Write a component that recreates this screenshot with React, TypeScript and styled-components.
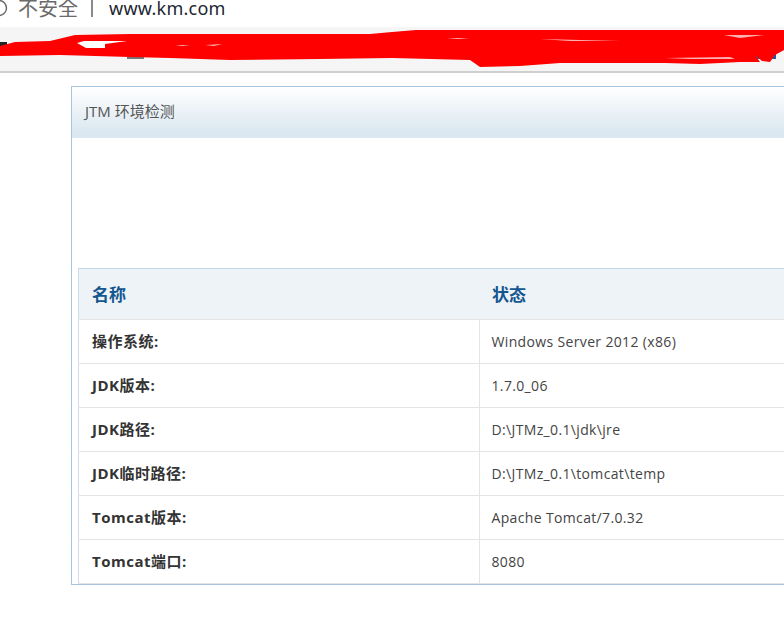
import { createGlobalStyle } from "styled-components";
import styled from "styled-components";

const Global = createGlobalStyle`
  html, body { margin: 0; padding: 0; background: #fff; }
  body {
    width: 784px; height: 624px; overflow: hidden; position: relative;
    font-family: "Open Sans", "Noto Sans CJK SC", sans-serif;
  }
`;

const AddressBar = styled.div`
  height: 15px; padding-bottom: 12px; display: flex; align-items: center;
  font-family: "Noto Sans", "Noto Sans CJK SC", sans-serif; font-size: 18px;
`;

const InfoIcon = styled.svg`width: 8px; height: 24px; flex: none;`;

const Insecure = styled.span`margin-left: 10px; color: #6a6a6a; font-size: 20px;`;

const Divider = styled.span`width: 2px; height: 18px; margin: 0 16px 0 13px; background: #8a8a8a;`;

const Url = styled.span`color: #1c2733; letter-spacing: .25px;`;

const BookmarkBar = styled.div`
  height: 44px; background: #f5f5f5;
  border-bottom: 2px solid #cfcfcf; position: relative;
`;

const Scribble = styled.svg`position: absolute; left: 0; top: -1px; width: 784px; height: 46px;`;

const Panel = styled.div`
  width: 760px; margin: 13px 0 0 71px;
  border: 1px solid #a9c4df; background: #fff;
`;

const PanelHeader = styled.div`
  height: 47px; display: flex; align-items: center; padding: 0 0 4px 13px;
  background: linear-gradient(#fff 0%, #dce8f1 85%);
  color: #555; font-size: 15px;
`;

const PanelBody = styled.div`padding: 130px 0 0 6px;`;

const Table = styled.table`
  width: 754px; border-collapse: collapse; table-layout: fixed;
  border-left: 1px solid #cfdbe8; font-size: 14px; color: #333;
`;

const HeadRow = styled.tr`background: #eef3f8; height: 51px;`;

const HeadCell = styled.th<{ $width?: number }>`
  width: ${({ $width }) => ($width ? `${$width}px` : "auto")};
  padding: 0 0 2px 13px; text-align: left;
  border-top: 1px solid #c5d8e8; border-bottom: 1px solid #e4e4e4;
  color: #14568f; font-size: 17px; font-weight: 700;
`;

const Row = styled.tr`height: 44px;`;

const Label = styled.td`
  padding: 0 0 3px 13px; border-bottom: 1px solid #e4e4e4;
  border-right: 1px solid #e4e4e4; color: #333; font-size: 15px; font-weight: 700; letter-spacing: .5px;
`;

const Value = styled.td`
  padding: 0 0 0 12px; border-bottom: 1px solid #e4e4e4; color: #444; letter-spacing: .35px;
`;

const rows = [
  ["操作系统:", "Windows Server 2012 (x86)"],
  ["JDK版本:", "1.7.0_06"],
  ["JDK路径:", "D:\\JTMz_0.1\\jdk\\jre"],
  ["JDK临时路径:", "D:\\JTMz_0.1\\tomcat\\temp"],
  ["Tomcat版本:", "Apache Tomcat/7.0.32"],
  ["Tomcat端口:", "8080"],
];

export default function App() {
  return (
    <>
      <Global />
      <AddressBar>
        <InfoIcon viewBox="0 0 8 24">
          <circle cx="-1" cy="12" r="7.5" fill="none" stroke="#666" strokeWidth="1.4" />
        </InfoIcon>
        <Insecure>不安全</Insecure>
        <Divider />
        <Url>www.km.com</Url>
      </AddressBar>
      <BookmarkBar>
        <Scribble viewBox="0 26 784 46">
          <rect x="128" y="50" width="15" height="8" fill="none" stroke="#777" strokeWidth="2" />
          <path d="M0 42 L7 42 L7 46 L0 46 Z" fill="#222" />
          <path d="M752 48 L776 48 L776 59 L752 59 Z" fill="#1c5da8" />
          <path
            d="M0 46 L15 42 L50 41 L75 35 L130 34 L320 34 L370 34 L392 32 L416 30 L784 30 L784 50 L775 55 L770 62 L762 61 L755 55 L760 62 L740 62 L700 64 L665 63 L600 63 L560 63 L520 66 L480 67 L470 60 L392 58 L320 59 L230 60 L170 58 L130 57 L60 55 L0 56 Z"
            fill="#ff0000"
          />
          <path d="M77 43 L84 41 L127 41 L105 44 L105 48 L86 48 Z" fill="#fff" />
          <path d="M175 45 L190 45 L182 46 Z M205 45 L222 44 L214 46 Z" fill="#ffb0b0" />
          <path d="M447 38 L470 38 L458 39 Z" fill="#ffb0b0" />
          <path d="M540 39 L620 41 L570 41 Z" fill="#ffb0b0" />
          <path d="M665 58 L730 57 L735 59 L690 59 Z" fill="#ffb0b0" />
          <path d="M724 35 L765 35 L740 38 Z" fill="#ffb0b0" />
        </Scribble>
      </BookmarkBar>
      <Panel>
        <PanelHeader>JTM 环境检测</PanelHeader>
        <PanelBody>
          <Table>
            <thead>
              <HeadRow>
                <HeadCell $width={387}>名称</HeadCell>
                <HeadCell>状态</HeadCell>
              </HeadRow>
            </thead>
            <tbody>
              {rows.map(([name, value]) => (
                <Row key={name}>
                  <Label>{name}</Label>
                  <Value>{value}</Value>
                </Row>
              ))}
            </tbody>
          </Table>
        </PanelBody>
      </Panel>
    </>
  );
}
